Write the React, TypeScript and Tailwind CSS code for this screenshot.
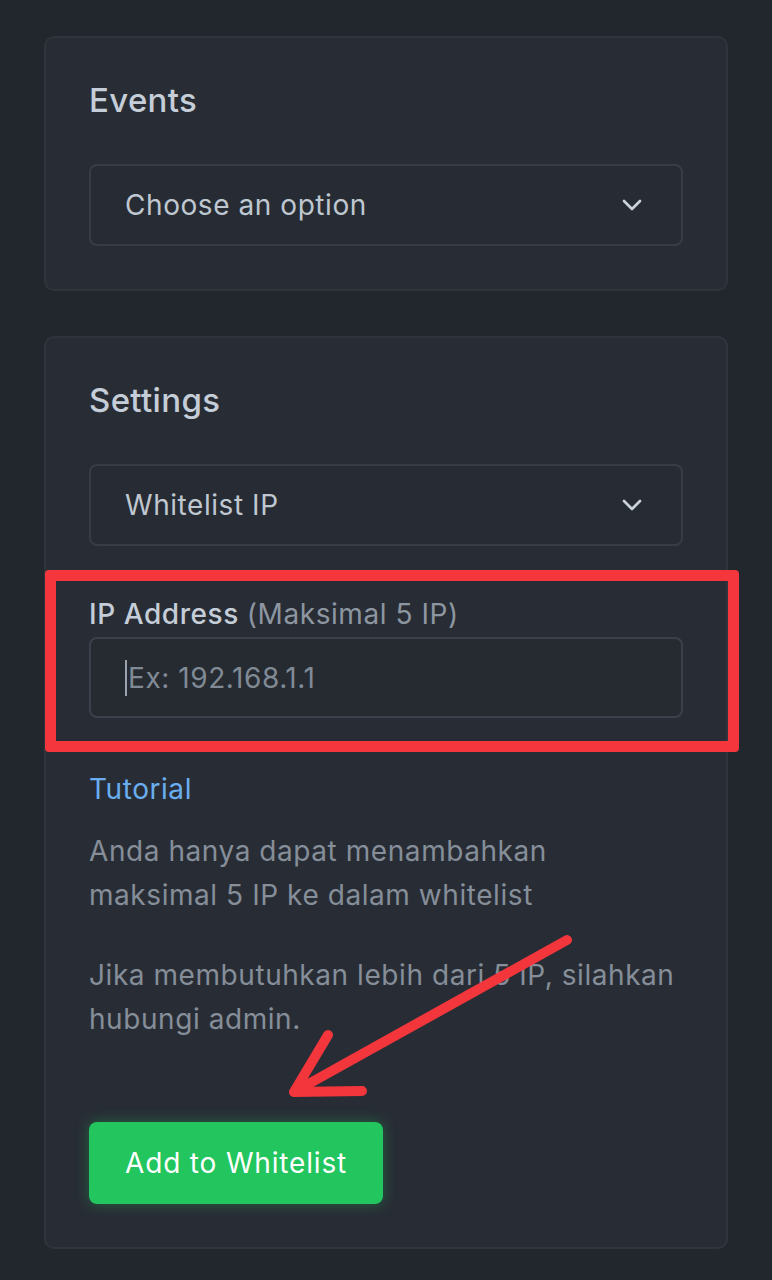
import { ChevronDown } from "lucide-react";

function SelectBox({ label }: { label: string }) {
  return (
    <div className="flex h-[82px] items-center justify-between rounded-[8px] border-2 border-[#373c45] bg-[#272c34] pl-[34px] pr-[33px]">
      <span className="text-[28px] leading-[36px] tracking-[0.02em] text-[#bfc7d0]">{label}</span>
      <ChevronDown size={32} strokeWidth={2} className="text-[#c9d1d9]" />
    </div>
  );
}

export default function App() {
  return (
    <div
      className="relative h-[1280px] w-[772px] overflow-hidden bg-[#22262d] px-[44px] pt-[36px]"
      style={{ fontFamily: "Inter, 'Open Sans', sans-serif" }}
    >
      <div className="flex flex-col gap-[45px]">
        <section className="rounded-[10px] border-2 border-[#30353d] bg-[#282d35] px-[43px] pb-[43px] pt-[44px]">
          <h2 className="text-[33px] font-medium leading-[36px] tracking-[0.01em] text-[#c5ced8]">Events</h2>
          <div className="mt-[46px]">
            <SelectBox label="Choose an option" />
          </div>
        </section>

        <section className="rounded-[10px] border-2 border-[#30353d] bg-[#282d35] px-[43px] pb-[43px] pt-[44px]">
          <h2 className="text-[33px] font-medium leading-[36px] tracking-[0.01em] text-[#c5ced8]">Settings</h2>
          <div className="mt-[46px]">
            <SelectBox label="Whitelist IP" />
          </div>

          <label className="mt-[50px] block text-[28px] font-medium leading-[36px] tracking-[0.02em] text-[#c5ced8]">
            IP Address <span className="font-normal text-[#8d96a1]">(Maksimal 5 IP)</span>
          </label>
          <div className="mt-[5px] flex h-[81px] items-center rounded-[8px] border-2 border-[#3b414a] bg-[#262b32] pl-[34px]">
            <span className="h-[36px] w-[2px] bg-[#9aa3ad]" />
            <span className="ml-[1px] text-[28px] leading-[36px] tracking-[0.02em] text-[#808a95]">Ex: 192.168.1.1</span>
          </div>

          <a className="mt-[53px] block text-[28px] leading-[36px] tracking-[0.02em] text-[#6aaef0]">Tutorial</a>

          <p className="mt-[22px] text-[28px] leading-[44px] tracking-[0.02em] text-[#858e99]">
            Anda hanya dapat menambahkan
            <br />
            maksimal 5 IP ke dalam whitelist
          </p>
          <p className="mt-[36px] text-[28px] leading-[44px] tracking-[0.02em] text-[#858e99]">
            Jika membutuhkan lebih dari 5 IP, silahkan hubungi admin.
          </p>

          <button className="mt-[81px] h-[82px] rounded-[8px] bg-[#22c55e] px-[36px] text-[28px] leading-[36px] tracking-[0.03em] text-white shadow-[0_0_14px_rgba(34,197,94,0.35)]">
            Add to Whitelist
          </button>
        </section>
      </div>

      {/* annotation overlays */}
      <div className="absolute left-[45px] top-[570px] h-[182px] w-[694px] rounded-[4px] border-[11px] border-[#f5363d]" />
      <svg className="absolute left-0 top-0" width="772" height="1280" fill="none">
        <path
          d="M567 940 L294 1092 M328 1035 L294 1092 L362 1091"
          stroke="#f2363c"
          strokeWidth="10"
          strokeLinecap="round"
          strokeLinejoin="round"
        />
      </svg>
    </div>
  );
}
